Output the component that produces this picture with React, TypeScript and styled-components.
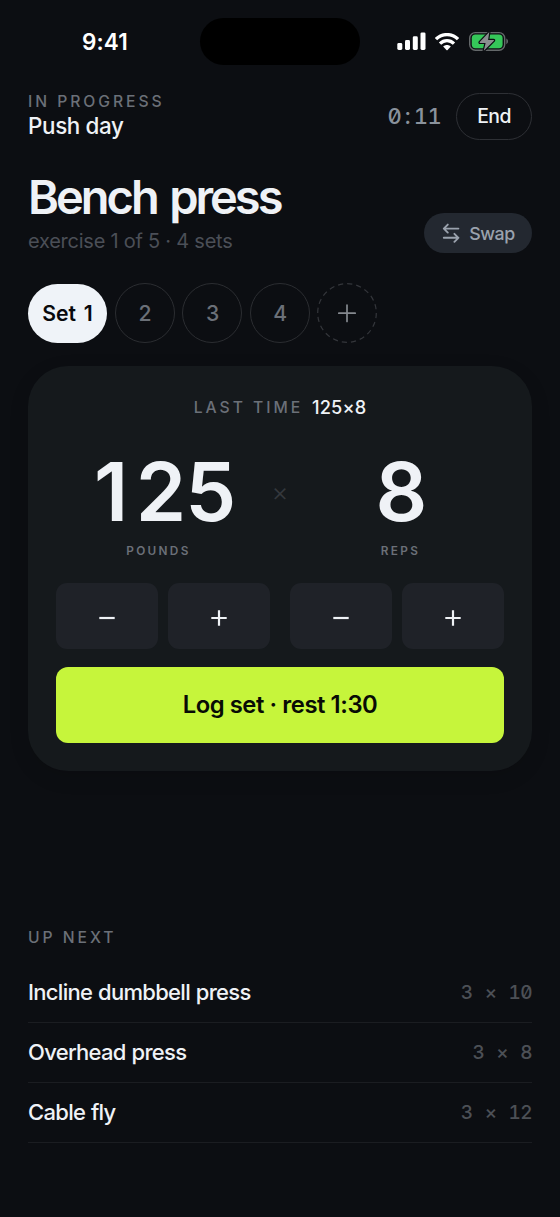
import React from "react";
import styled, { createGlobalStyle } from "styled-components";

const GlobalStyle = createGlobalStyle`
  * { box-sizing: border-box; }
  body { margin: 0; background: #0c0e12; }
  button { font: inherit; padding: 0; margin: 0; border: 0; color: inherit; }
`;

const Screen = styled.main`
  width: 560px;
  height: 1217px;
  overflow: hidden;
  background: #0c0e12;
  color: #eff2f6;
  font-family: Inter, "Liberation Sans", sans-serif;
  padding: 18px 28px 0;
  display: flex;
  flex-direction: column;
`;

const StatusBar = styled.div`
  height: 47px;
  display: grid;
  grid-template-columns: 172px 160px 172px;
  align-items: center;
`;

const Clock = styled.div`
  padding-left: 54px;
  font-size: 22.5px;
  line-height: 28px;
  font-weight: 600;
  letter-spacing: 0.1px;
  color: #fff;
`;

const Island = styled.div`
  height: 47px;
  border-radius: 24px;
  background: #000;
`;

const StatusIcons = styled.div`
  display: flex;
  align-items: center;
  padding-left: 37px;
  svg { display: block; flex: none; }
  svg + svg { margin-left: 9px; }
  svg:last-child { margin-left: 10px; }
`;

const Header = styled.header`
  margin-top: 27px;
  height: 48px;
  display: flex;
  align-items: center;
  justify-content: space-between;
`;

const HeaderText = styled.div`
  display: flex;
  flex-direction: column;
`;

const Overline = styled.div`
  font-size: 15.7px;
  line-height: 20px;
  font-weight: 550;
  letter-spacing: 2.95px;
  color: #6b7078;
`;

const Workout = styled.div`
  font-size: 22.4px;
  line-height: 28px;
  font-weight: 550;
  letter-spacing: -0.35px;
`;

const HeaderActions = styled.div`
  display: flex;
  align-items: center;
  gap: 15px;
`;

const Mono = styled.span<{ $size: number; $color: string }>`
  font-size: ${(p) => p.$size}px;
  color: ${(p) => p.$color};
  font-feature-settings: "tnum", "zero";
  font-weight: 450;
  letter-spacing: -0.03em;
  word-spacing: 0.4em;
  white-space: pre;
`;

const Colon = styled.span`
  padding: 0 3.9px 0 3.6px;
`;

const EndButton = styled.button`
  width: 76px;
  height: 47px;
  border: 1px solid #2e3035;
  border-radius: 24px;
  background: transparent;
  font-size: 19.4px;
  font-weight: 500;
  letter-spacing: -0.6px;
`;

const TitleRow = styled.section`
  margin-top: 31px;
  height: 82px;
  display: flex;
  justify-content: space-between;
  align-items: flex-end;
`;

const Title = styled.h1`
  margin: 0;
  font-size: 47px;
  line-height: 54px;
  font-weight: 600;
  letter-spacing: -3px;
  word-spacing: 3.6px;
`;

const Subtitle = styled.div`
  margin-top: 5px;
  margin-bottom: -1px;
  font-size: 20px;
  line-height: 25px;
  letter-spacing: -0.24px;
  color: #4b4f57;
`;

const SwapButton = styled.button`
  width: 108px;
  height: 40px;
  border-radius: 20px;
  background: #232830;
  color: #9aa2ad;
  font-size: 17.8px;
  font-weight: 500;
  letter-spacing: -0.45px;
  display: flex;
  align-items: center;
  justify-content: center;
  gap: 9px;
  padding-left: 1px;
`;

const Sets = styled.div`
  margin-top: 30px;
  height: 60px;
  display: flex;
  align-items: center;
  gap: 7.6px;
`;

const SetPill = styled.button`
  width: 79px;
  height: 59px;
  border-radius: 30px;
  background: #eff3f8;
  color: #08090c;
  font-size: 21.2px;
  font-weight: 600;
  letter-spacing: 0;
  word-spacing: 2.4px;
`;

const SetCircle = styled.button`
  width: 60px;
  height: 60px;
  border-radius: 50%;
  border: 1px solid #2b2d31;
  background: transparent;
  color: #6b7078;
  font-size: 21.2px;
  font-weight: 500;
  padding-left: 1px;
`;

const AddSet = styled.button`
  width: 60px;
  height: 60px;
  background: transparent;
  svg { display: block; }
`;

const Card = styled.section`
  margin-top: 23px;
  height: 405px;
  border-radius: 40px;
  background: #15191c;
  box-shadow: 0 6px 20px rgba(0, 0, 0, 0.12);
  padding: 28px 28px 0;
`;

const LastTime = styled.div`
  height: 26px;
  display: flex;
  justify-content: center;
  align-items: center;
  gap: 9px;
  ${Overline} { padding-top: 1px; }
`;

const LastValue = styled.span`
  font-size: 18.2px;
  font-weight: 500;
  letter-spacing: 0.1px;
`;

const Figures = styled.div`
  margin-top: 22px;
  height: 141px;
  display: grid;
  grid-template-columns: 206px 36px 206px;
`;

const Figure = styled.div`
  display: flex;
  flex-direction: column;
  align-items: center;
`;

const Amount = styled.div<{ $indent?: number }>`
  padding-left: ${(p) => p.$indent ?? 0}px;
  font-size: 81px;
  line-height: 100px;
  font-weight: 600;
  letter-spacing: -1px;
`;

const LeadDigit = styled.span`
  letter-spacing: 7.5px;
`;

const Unit = styled.div`
  font-size: 11.8px;
  line-height: 16px;
  margin-top: 0.5px;
  padding-right: 1px;
  font-weight: 600;
  letter-spacing: 2.3px;
  color: #6b7078;
`;

const Times = styled.div`
  text-align: center;
  font-size: 26px;
  line-height: 99px;
  font-weight: 300;
  color: #34383c;
`;

const Steppers = styled.div`
  display: flex;
  justify-content: space-between;
`;

const StepGroup = styled.div`
  display: flex;
  gap: 10px;
`;

const StepButton = styled.button`
  width: 102px;
  height: 66px;
  padding-top: 4px;
  border-radius: 11px;
  background: #1f2228;
  color: #eff2f6;
  display: flex;
  align-items: center;
  justify-content: center;
  svg { display: block; }
`;

const LogButton = styled.button`
  margin-top: 18px;
  width: 100%;
  height: 76px;
  padding-bottom: 2px;
  border-radius: 12px;
  background: #c6f53b;
  color: #080b05;
  font-size: 23.8px;
  font-weight: 600;
  letter-spacing: -0.43px;
`;

const UpNext = styled.section`
  margin-top: 157px;
`;

const NextRow = styled.div`
  height: 60.2px;
  display: flex;
  align-items: center;
  justify-content: space-between;
  border-bottom: 1px solid #1b1d21;
  ${Mono} { padding-top: 1px; }
`;

const NextList = styled.div`
  margin-top: 14.4px;
`;

const NextName = styled.div`
  font-size: 22px;
  font-weight: 500;
  letter-spacing: -0.7px;
  word-spacing: 0.6px;
`;

const Signal = () => (
  <svg width="29" height="19" viewBox="0 0 29 19" fill="#fff">
    <rect x="0.3" y="11" width="5" height="7" rx="1.4" />
    <rect x="8" y="8" width="5" height="10" rx="1.4" />
    <rect x="15.8" y="4.3" width="5" height="13.7" rx="1.4" />
    <rect x="23.5" y="0.4" width="5" height="17.6" rx="1.4" />
  </svg>
);

const Wifi = () => (
  <svg width="24" height="18" viewBox="0 0 24 18">
    <g fill="none" stroke="#fff" strokeWidth="3.3">
      <path d="M1 6.2C7.2 0 16.8 0 23 6.2" />
      <path d="M5 10.6C9 6.6 15 6.6 19 10.6" />
    </g>
    <path fill="#fff" d="M8.2 13.6C10.4 11.6 13.6 11.6 15.8 13.6L12.6 16.9Q12 17.5 11.4 16.9Z" />
  </svg>
);

const Battery = () => (
  <svg width="40" height="22" viewBox="0 0 40 22">
    <rect x="0.7" y="1.6" width="35" height="17.6" rx="5.6" fill="none" stroke="#64686a" strokeWidth="1.4" />
    <path d="M37.3 7.6C39.6 8.6 39.6 12.2 37.3 13.2Z" fill="#64686a" />
    <rect x="2.8" y="3.6" width="30.8" height="13.6" rx="3.6" fill="#35c759" />
    <path
      d="M20.3 1L10.7 11.1Q10.3 11.9 11.1 11.9H16.6L14.8 19.8L24.9 9.7Q25.3 8.9 24.5 8.9H19.1Z"
      fill="#8b8e90"
      stroke="#0c0e12"
      strokeWidth="2.4"
      paintOrder="stroke"
      strokeLinejoin="round"
    />
  </svg>
);

const SwapIcon = () => (
  <svg width="18" height="20" viewBox="0 0 18 20" fill="none" stroke="currentColor" strokeWidth="1.9" strokeLinecap="round" strokeLinejoin="round">
    <path d="M16.4 5.6H1.8M5.8 1.6L1.8 5.6L5.8 9.6" />
    <path d="M1.8 14.8H16.4M12.4 10.8L16.4 14.8L12.4 18.8" />
  </svg>
);

const PlusCircle = () => (
  <svg width="60" height="60" viewBox="0 0 60 60" fill="none">
    <circle cx="30" cy="30" r="29.3" stroke="#34363b" strokeWidth="1.2" strokeDasharray="5.2 4" />
    <path d="M30 22V38.4M21.8 30.2H38.2" stroke="#85898f" strokeWidth="1.7" strokeLinecap="round" />
  </svg>
);

const StepIcon = ({ plus }: { plus?: boolean }) => (
  <svg width="16" height="16" viewBox="0 0 16 16" fill="none" stroke="currentColor" strokeWidth="2.2">
    <path d={plus ? "M0.3 8H15.7M8 0.3V15.7" : "M0.3 8H15.7"} />
  </svg>
);

const NEXT = [
  { name: "Incline dumbbell press", plan: "3 × 10" },
  { name: "Overhead press", plan: "3 × 8" },
  { name: "Cable fly", plan: "3 × 12" },
];

export default function App() {
  return (
    <Screen>
      <GlobalStyle />
      <StatusBar>
        <Clock>9:41</Clock>
        <Island />
        <StatusIcons>
          <Signal />
          <Wifi />
          <Battery />
        </StatusIcons>
      </StatusBar>

      <Header>
        <HeaderText>
          <Overline>IN PROGRESS</Overline>
          <Workout>Push day</Workout>
        </HeaderText>
        <HeaderActions>
          <Mono $size={22} $color="#8a929c">
            0<Colon>:</Colon>11
          </Mono>
          <EndButton>End</EndButton>
        </HeaderActions>
      </Header>

      <TitleRow>
        <div>
          <Title>Bench press</Title>
          <Subtitle>exercise 1 of 5 · 4 sets</Subtitle>
        </div>
        <SwapButton>
          <SwapIcon />
          Swap
        </SwapButton>
      </TitleRow>

      <Sets>
        <SetPill>Set 1</SetPill>
        {[2, 3, 4].map((n) => (
          <SetCircle key={n}>{n}</SetCircle>
        ))}
        <AddSet aria-label="Add set">
          <PlusCircle />
        </AddSet>
      </Sets>

      <Card>
        <LastTime>
          <Overline>LAST TIME</Overline>
          <LastValue>125×8</LastValue>
        </LastTime>
        <Figures>
          <Figure>
            <Amount $indent={11}>
              <LeadDigit>1</LeadDigit>25
            </Amount>
            <Unit>POUNDS</Unit>
          </Figure>
          <Times>×</Times>
          <Figure>
            <Amount>8</Amount>
            <Unit>REPS</Unit>
          </Figure>
        </Figures>
        <Steppers>
          {["pounds", "reps"].map((unit) => (
            <StepGroup key={unit}>
              <StepButton aria-label={`Fewer ${unit}`}>
                <StepIcon />
              </StepButton>
              <StepButton aria-label={`More ${unit}`}>
                <StepIcon plus />
              </StepButton>
            </StepGroup>
          ))}
        </Steppers>
        <LogButton>Log set · rest 1:30</LogButton>
      </Card>

      <UpNext>
        <Overline>UP NEXT</Overline>
        <NextList>
          {NEXT.map((item) => (
            <NextRow key={item.name}>
              <NextName>{item.name}</NextName>
              <Mono $size={19} $color="#4c5056">{item.plan}</Mono>
            </NextRow>
          ))}
        </NextList>
      </UpNext>
    </Screen>
  );
}
